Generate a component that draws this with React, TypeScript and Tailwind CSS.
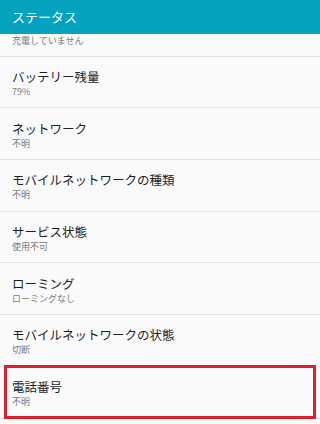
import React from "react";

const rows: { t: string; s: string }[] = [
  { t: "バッテリー残量", s: "79%" },
  { t: "ネットワーク", s: "不明" },
  { t: "モバイルネットワークの種類", s: "不明" },
  { t: "サービス状態", s: "使用不可" },
  { t: "ローミング", s: "ローミングなし" },
  { t: "モバイルネットワークの状態", s: "切断" },
  { t: "電話番号", s: "不明" },
];

export default function App() {
  return (
    <div
      className="w-full h-[424px] overflow-hidden bg-[#fafafa] flex flex-col"
      style={{ fontFamily: '"Noto Sans CJK JP", "Noto Sans", sans-serif' }}
    >
      <div className="h-[34px] shrink-0 bg-[#05a3c0] flex items-center px-[12px]">
        <span className="text-white text-[13px] leading-[16px] -mt-[1px]">ステータス</span>
      </div>
      <div className="flex-1 overflow-hidden">
        <div className="h-[22.7px] box-border border-b border-[#e2e2e2] pl-[12px] pt-[0.8px]">
          <div className="text-[9px] leading-[12px] text-[#7a7a7a]">充電していません</div>
        </div>
        {rows.map((r, i) => (
          <div
            key={i}
            className="relative h-[51.7px] box-border border-b border-[#e2e2e2] pl-[12px] pt-[12.3px]"
          >
            <div className="text-[12.5px] leading-[16px] text-[#1f1f1f]">{r.t}</div>
            <div className="text-[9px] leading-[12px] mt-[1px] text-[#7a7a7a]">{r.s}</div>
            {i === rows.length - 1 && (
              <div className="absolute left-[4px] right-[4px] top-[-1.5px] bottom-[-1px] border-[3px] border-[#d8232f]" />
            )}
          </div>
        ))}
      </div>
    </div>
  );
}
